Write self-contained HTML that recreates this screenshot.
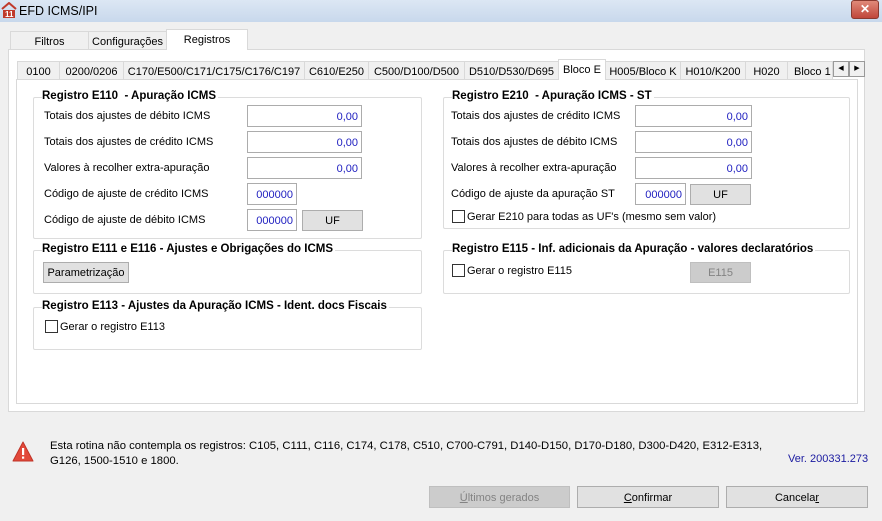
<!DOCTYPE html>
<html><head><meta charset="utf-8"><style>
*{box-sizing:border-box;margin:0;padding:0}
body{width:882px;height:521px;background:#f0f0f0;font-family:"Liberation Sans",sans-serif;font-size:11px;color:#000;position:relative;overflow:hidden}
.a{position:absolute}
.title{left:0;top:0;width:882px;height:22px;background:linear-gradient(#dce7f4,#c8d8ec);}
.tab{position:absolute;border:1px solid #d9d9d9;border-bottom:none;background:#f0f0f0;text-align:center;white-space:nowrap}
.tab.act{background:#fff;z-index:2}
.panel{position:absolute;background:#fff;border:1px solid #d9d9d9}
.gb{position:absolute;border:1px solid #dcdcdc;border-radius:2px}
.gb b{position:absolute;left:8px;top:-8px;background:#fff;padding:0 2px 0 0;font-size:11.5px;white-space:nowrap}
.inp{position:absolute;height:22px;border:1px solid #acacac;background:#fff;color:#2020c0;text-align:right;padding:5px 3px 0 0;font-size:11px}
.btn{position:absolute;height:21px;border:1px solid #adadad;background:#e1e1e1;text-align:center;padding-top:4px}
.lbl{position:absolute;white-space:nowrap}
.cb{position:absolute;width:13px;height:13px;border:1px solid #333;background:#fff}
</style></head><body>
<div class="a title"></div>
<svg class="a" style="left:1px;top:2px" width="16" height="16" viewBox="0 0 16 16"><path d="M1 7 L8 1 L15 7" stroke="#c0392b" stroke-width="2" fill="none"/><rect x="2" y="8" width="12" height="8" fill="#c0392b"/><text x="4" y="15" font-size="8" fill="#fff" font-family="Liberation Sans" font-weight="bold">11</text></svg>
<div class="lbl" style="left:19px;top:4px;font-size:12.5px">EFD ICMS/IPI</div>
<div class="a" style="left:851px;top:0;width:28px;height:19px;background:linear-gradient(#e08a7a,#c0463a);border:1px solid #8a3a30;border-radius:3px;color:#fff;text-align:center;font-weight:bold;font-size:12px;line-height:17px">✕</div>

<div class="tab" style="left:10px;top:31px;width:79px;height:19px;padding-top:4px">Filtros</div>
<div class="tab" style="left:88px;top:31px;width:79px;height:19px;padding-top:4px">Configurações</div>
<div class="tab act" style="left:166px;top:29px;width:82px;height:21px;padding-top:4px">Registros</div>
<div class="panel" style="left:8px;top:49px;width:857px;height:363px"></div>

<div class="tab" style="left:17px;top:61px;width:43px;height:19px;padding-top:4px">0100</div>
<div class="tab" style="left:59px;top:61px;width:65px;height:19px;padding-top:4px">0200/0206</div>
<div class="tab" style="left:123px;top:61px;width:182px;height:19px;padding-top:4px">C170/E500/C171/C175/C176/C197</div>
<div class="tab" style="left:304px;top:61px;width:65px;height:19px;padding-top:4px">C610/E250</div>
<div class="tab" style="left:368px;top:61px;width:97px;height:19px;padding-top:4px">C500/D100/D500</div>
<div class="tab" style="left:464px;top:61px;width:95px;height:19px;padding-top:4px">D510/D530/D695</div>
<div class="tab act" style="left:558px;top:59px;width:48px;height:21px;padding-top:4px">Bloco E</div>
<div class="tab" style="left:605px;top:61px;width:76px;height:19px;padding-top:4px">H005/Bloco K</div>
<div class="tab" style="left:680px;top:61px;width:66px;height:19px;padding-top:4px">H010/K200</div>
<div class="tab" style="left:745px;top:61px;width:43px;height:19px;padding-top:4px">H020</div>
<div class="tab" style="left:787px;top:61px;width:46px;height:19px;padding-top:4px;overflow:hidden;text-align:left;padding-left:6px">Bloco 1</div>
<div class="a" style="left:833px;top:61px;width:16px;height:16px;border:1px solid #999;background:#f0f0f0;font-size:7px;text-align:center;line-height:14px">◀</div>
<div class="a" style="left:849px;top:61px;width:16px;height:16px;border:1px solid #999;background:#f0f0f0;font-size:7px;text-align:center;line-height:14px">▶</div>
<div class="panel" style="left:16px;top:79px;width:842px;height:325px;z-index:1"></div>

<div style="position:absolute;left:0;top:0;z-index:3">
<div class="gb" style="left:33px;top:97px;width:389px;height:142px"><b>Registro E110 &nbsp;- Apuração ICMS</b></div>
<div class="lbl" style="left:44px;top:110px">Totais dos ajustes de débito ICMS</div>
<div class="inp" style="left:247px;top:105px;width:115px">0,00</div>
<div class="lbl" style="left:44px;top:136px">Totais dos ajustes de crédito ICMS</div>
<div class="inp" style="left:247px;top:131px;width:115px">0,00</div>
<div class="lbl" style="left:44px;top:162px">Valores à recolher extra-apuração</div>
<div class="inp" style="left:247px;top:157px;width:115px">0,00</div>
<div class="lbl" style="left:44px;top:188px">Código de ajuste de crédito ICMS</div>
<div class="inp" style="left:247px;top:183px;width:50px">000000</div>
<div class="lbl" style="left:44px;top:214px">Código de ajuste de débito ICMS</div>
<div class="inp" style="left:247px;top:209px;width:50px">000000</div>
<div class="btn" style="left:302px;top:210px;width:61px">UF</div>

<div class="gb" style="left:33px;top:250px;width:389px;height:44px"><b>Registro E111 e E116 - Ajustes e Obrigações do ICMS</b></div>
<div class="btn" style="left:43px;top:262px;width:86px">Parametrização</div>

<div class="gb" style="left:33px;top:307px;width:389px;height:43px"><b>Registro E113 - Ajustes da Apuração ICMS - Ident. docs Fiscais</b></div>
<div class="cb" style="left:45px;top:320px"></div>
<div class="lbl" style="left:60px;top:321px">Gerar o registro E113</div>

<div class="gb" style="left:443px;top:97px;width:407px;height:132px"><b>Registro E210 &nbsp;- Apuração ICMS - ST</b></div>
<div class="lbl" style="left:451px;top:110px">Totais dos ajustes de crédito ICMS</div>
<div class="inp" style="left:635px;top:105px;width:117px">0,00</div>
<div class="lbl" style="left:451px;top:136px">Totais dos ajustes de débito ICMS</div>
<div class="inp" style="left:635px;top:131px;width:117px">0,00</div>
<div class="lbl" style="left:451px;top:162px">Valores à recolher extra-apuração</div>
<div class="inp" style="left:635px;top:157px;width:117px">0,00</div>
<div class="lbl" style="left:451px;top:188px">Código de ajuste da apuração ST</div>
<div class="inp" style="left:635px;top:183px;width:51px">000000</div>
<div class="btn" style="left:690px;top:184px;width:61px">UF</div>
<div class="cb" style="left:452px;top:210px"></div>
<div class="lbl" style="left:467px;top:211px">Gerar E210 para todas as UF's (mesmo sem valor)</div>

<div class="gb" style="left:443px;top:250px;width:407px;height:44px"><b>Registro E115 - Inf. adicionais da Apuração - valores declaratórios</b></div>
<div class="cb" style="left:452px;top:264px"></div>
<div class="lbl" style="left:467px;top:265px">Gerar o registro E115</div>
<div class="btn" style="left:690px;top:262px;width:61px;background:#ccc;border-color:#bfbfbf;color:#838383">E115</div>
</div>

<svg class="a" style="left:12px;top:441px" width="22" height="22" viewBox="0 0 22 22"><path d="M11 1 L21 20 L1 20 Z" fill="#e2483a" stroke="#c03428" stroke-linejoin="round"/><rect x="10" y="7" width="2.2" height="7" fill="#fff"/><rect x="10" y="15.5" width="2.2" height="2.2" fill="#fff"/></svg>
<div class="lbl" style="left:50px;top:439px;line-height:15px;font-size:11.3px">Esta rotina não contempla os registros: C105, C111, C116, C174, C178, C510, C700-C791, D140-D150, D170-D180, D300-D420, E312-E313,<br>G126, 1500-1510 e 1800.</div>
<div class="lbl" style="left:788px;top:453px;color:#1a1aa0">Ver. 200331.273</div>

<div class="btn" style="left:429px;top:486px;width:141px;height:22px;background:#ccc;border-color:#bfbfbf;color:#838383;padding-top:5px"><u>Ú</u>ltimos gerados</div>
<div class="btn" style="left:577px;top:486px;width:142px;height:22px;padding-top:5px"><u>C</u>onfirmar</div>
<div class="btn" style="left:726px;top:486px;width:142px;height:22px;padding-top:5px">Cancela<u>r</u></div>
</body></html>
